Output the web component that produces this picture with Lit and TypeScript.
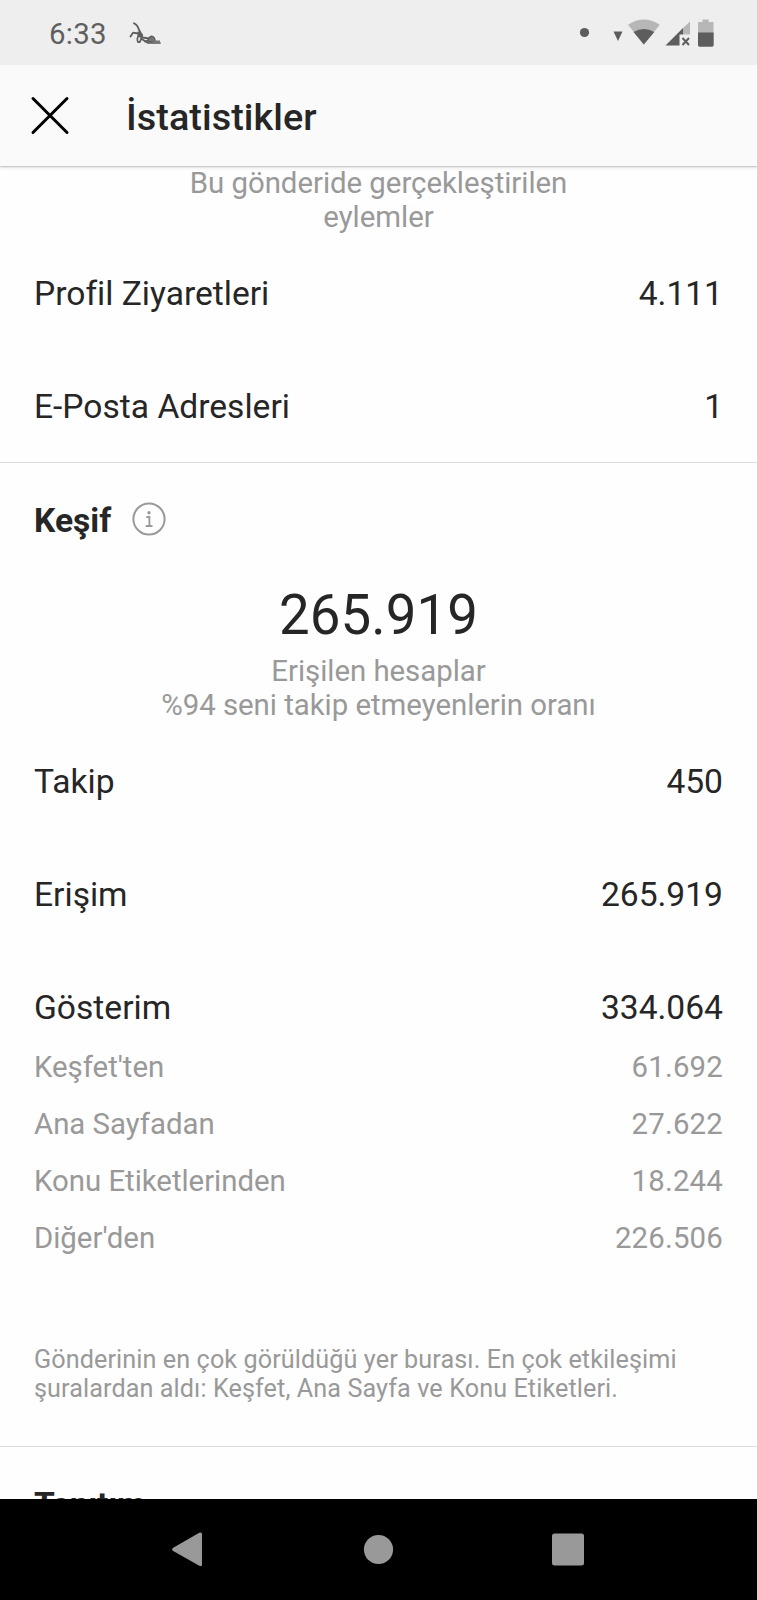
import { LitElement, html, css } from "lit";
import { customElement } from "lit/decorators.js";

type Row = [label: string, value: string];

const ACTIONS: Row[] = [
  ["Profil Ziyaretleri", "4.111"],
  ["E-Posta Adresleri", "1"],
];

const DISCOVERY: Row[] = [
  ["Takip", "450"],
  ["Erişim", "265.919"],
  ["Gösterim", "334.064"],
];

const SOURCES: Row[] = [
  ["Keşfet'ten", "61.692"],
  ["Ana Sayfadan", "27.622"],
  ["Konu Etiketlerinden", "18.244"],
  ["Diğer'den", "226.506"],
];

@customElement("status-bar")
class StatusBar extends LitElement {
  static styles = css`
    :host {
      display: flex;
      align-items: center;
      height: 65px;
      background: #eeeeee;
      color: #5f5f5f;
    }
    .time {
      width: 79px;
      padding-left: 49px;
      font-size: 29.4px;
      letter-spacing: 0.3px;
      line-height: 34px;
      padding-top: 2px;
    }
    .spacer { flex: 1; }
    svg { display: block; }
  `;

  render() {
    return html`
      <span class="time">6:33</span>
      <svg width="36" height="65" viewBox="128 -0.5 36 65" fill="none" stroke="#5d5d5d" stroke-linecap="round" stroke-linejoin="round">
        <path d="M134 22.8Q137.5 24 139 29.5L141 33" stroke-width="1.8" />
        <path d="M130.5 36L133 32.2L138 33" stroke-width="1.8" />
        <path d="M138 31.5L142.5 34L142 37L138.5 36Z" fill="#5d5d5d" stroke-width="1.2" />
        <path d="M138.5 35Q136.5 39 138 41.5Q140.5 42.5 141 38L148 42.5H160" stroke-width="1.7" />
        <path d="M142.5 37L149 38M145 41L149 39.5" stroke-width="1.8" />
        <path d="M148.5 41.5Q147.5 37 151 35.8Q155 35.5 155.3 41.5Z" fill="#777" stroke-width="1.4" />
        <path d="M153 41.5H160" stroke="#777" stroke-width="3" stroke-linecap="butt" />
      </svg>
      <span class="spacer"></span>
      <svg width="182" height="65" viewBox="575 -0.5 182 65">
        <circle cx="584.5" cy="32" r="4.6" fill="#5d5d5d" />
        <path d="M613.5 31H622.5L618 40.5Z" fill="#5d5d5d" />
        <path d="M628 24.3Q643.8 13.5 659.8 24.3L643.8 44Z" fill="#b7b7b7" />
        <path d="M633.5 31.5Q643.8 25.5 654.3 31.5L643.8 44Z" fill="#5d5d5d" />
        <path d="M690 21V34H683V27.5Z" fill="#b7b7b7" />
        <path d="M683 27.5V34H679.5V45H665.5Z" fill="#5d5d5d" />
        <path d="M682.5 37.5L689 44.5M689 37.5L682.5 44.5" stroke="#5d5d5d" stroke-width="2" />
        <path d="M702.5 19H708.7V21.5H713.5V32.5H698V21.5H702.5Z" fill="#b7b7b7" />
        <path d="M698 32H713.7V44.5Q713.7 46.3 712 46.3H699.7Q698 46.3 698 44.5Z" fill="#5d5d5d" />
      </svg>
    `;
  }
}

@customElement("stat-row")
class StatRow extends LitElement {
  static properties = { label: {}, value: {} };
  declare label: string;
  declare value: string;

  static styles = css`
    :host {
      display: flex;
      align-items: center;
      justify-content: space-between;
      height: 113px;
      padding: 0 34px;
      font-size: 33.6px;
      color: #262626;
    }
    :host(.minor) {
      height: 56.8px;
      font-size: 29.4px;
      letter-spacing: -0.03px;
      color: #999999;
    }
    :host(.minor) .value {
      letter-spacing: 0.18px;
    }
  `;

  render() {
    return html`<span>${this.label}</span><span class="value">${this.value}</span>`;
  }
}

@customElement("app-root")
class AppRoot extends LitElement {
  static styles = css`
    :host {
      display: flex;
      flex-direction: column;
      height: 1600px;
      overflow: hidden;
      background: #fefefe;
      color: #262626;
      font-family: Roboto, sans-serif;
      font-variant-ligatures: none;
    }
    status-bar {
      flex: none;
      z-index: 2;
    }
    .header {
      flex: none;
      display: flex;
      align-items: center;
      gap: 56px;
      box-sizing: border-box;
      height: 101px;
      padding-left: 30px;
      background: #fafafa;
      box-shadow: 0 1px 1px rgba(0, 0, 0, 0.13), 0 2px 3px rgba(0, 0, 0, 0.1);
      z-index: 1;
    }
    .title {
      margin: 0;
      font-size: 37.8px;
      font-weight: 500;
      letter-spacing: 0.06px;
      line-height: 44px;
      padding-top: 2px;
    }
    .content {
      flex: 1;
      min-height: 0;
      overflow: hidden;
    }
    .section {
      box-sizing: border-box;
      border-bottom: 1px solid #dbdbdb;
    }
    .actions { height: 297px; }
    .discovery { height: 984px; }
    .caption {
      font-size: 29.4px;
      letter-spacing: -0.03px;
      line-height: 34px;
      color: #999999;
      text-align: center;
      padding-bottom: 3px;
    }
    .heading {
      display: flex;
      align-items: center;
      gap: 21px;
      box-sizing: border-box;
      height: 113px;
      margin: 0;
      padding: 1px 0 0 34px;
      font-size: 33.6px;
      font-weight: 700;
    }
    .heading svg { margin-top: -3px; }
    .next { letter-spacing: -0.3px; }
    .total {
      padding-top: 7px;
      font-size: 54.6px;
      line-height: 64px;
      letter-spacing: 0.1px;
      text-align: center;
      padding-bottom: 7px;
    }
    .sources { margin-top: -25px; }
    .note {
      margin: 0;
      padding: 79px 34px 0;
      font-size: 25.2px;
      letter-spacing: 0.09px;
      line-height: 29px;
      color: #999999;
    }
    .nav {
      flex: none;
      height: 101px;
      background: #000;
    }
    svg { display: block; flex: none; }
  `;

  private rows(items: Row[], kind = "") {
    return items.map(([label, value]) => html`<stat-row class=${kind} .label=${label} .value=${value}></stat-row>`);
  }

  render() {
    return html`
      <status-bar></status-bar>
      <header class="header">
        <svg width="40" height="40" viewBox="0 0.5 40 40" stroke="#000" stroke-width="3" stroke-linecap="round">
          <path d="M3 3L37 37M37 3L3 37" />
        </svg>
        <h1 class="title">İstatistikler</h1>
      </header>
      <main class="content">
        <section class="section actions">
          <div class="caption">Bu gönderide gerçekleştirilen<br />eylemler</div>
          ${this.rows(ACTIONS)}
        </section>
        <section class="section discovery">
          <h2 class="heading">
            Keşif
            <svg width="34" height="34" viewBox="0 0 34 34" fill="none" stroke="#999" stroke-width="2">
              <circle cx="17" cy="17" r="15.6" />
              <circle cx="17" cy="10.7" r="1.7" fill="#999" stroke="none" />
              <path d="M14.3 15H17.4V24M13.7 24H20.5" stroke-width="1.8" />
            </svg>
          </h2>
          <div class="total">265.919</div>
          <div class="caption">Erişilen hesaplar<br />%94 seni takip etmeyenlerin oranı</div>
          ${this.rows(DISCOVERY)}
          <div class="sources">${this.rows(SOURCES, "minor")}</div>
          <p class="note">Gönderinin en çok görüldüğü yer burası. En çok etkileşimi<br />şuralardan aldı: Keşfet, Ana Sayfa ve Konu Etiketleri.</p>
        </section>
        <h2 class="heading next">Tanıtım</h2>
      </main>
      <nav class="nav">
        <svg width="757" height="101" viewBox="0 1499 757 101" fill="#999">
          <path d="M173.2 1547.8L199.3 1532.8Q202 1531.6 202 1534V1564.6Q202 1567 199.3 1565.8L173.2 1551Q171 1549.4 173.2 1547.8Z" />
          <circle cx="378.5" cy="1549.5" r="14.6" />
          <rect x="552" y="1533.5" width="32" height="32" rx="2.5" />
        </svg>
      </nav>
    `;
  }
}
